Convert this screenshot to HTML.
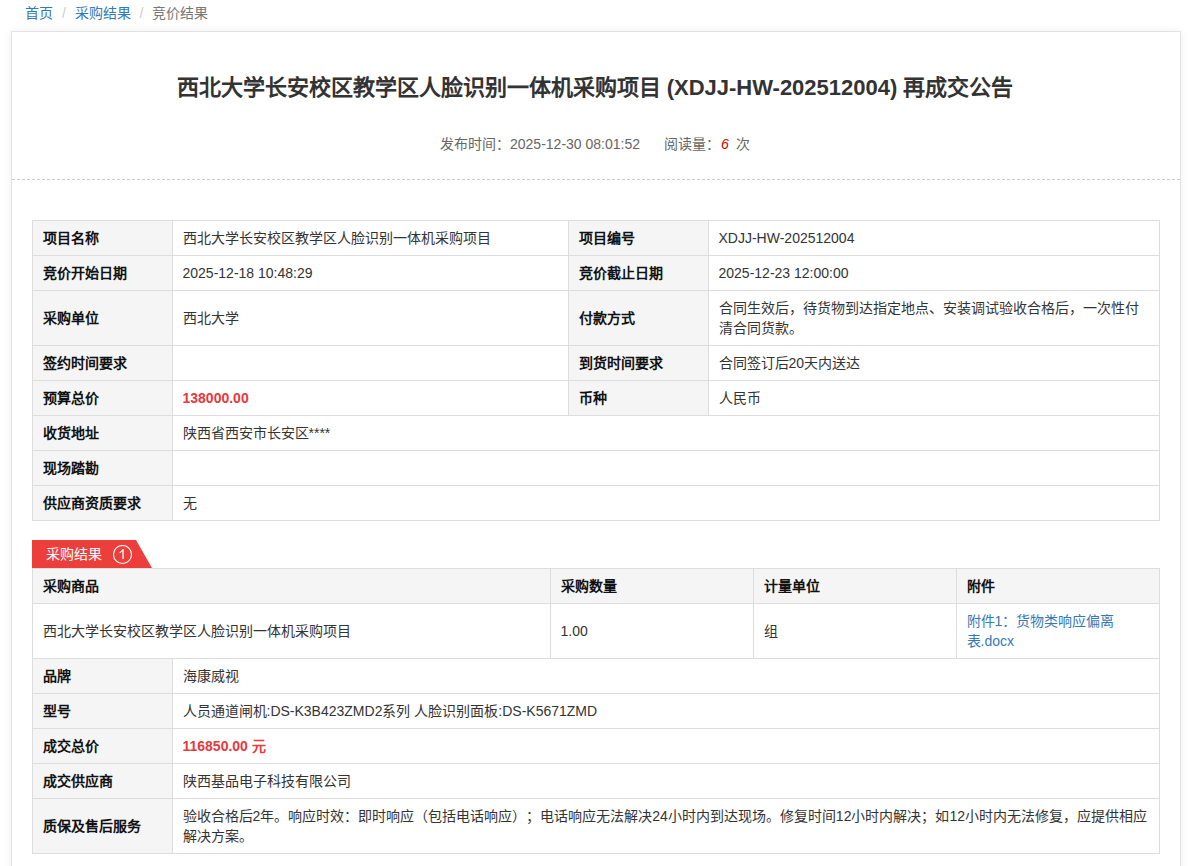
<!DOCTYPE html>
<html lang="zh-CN">
<head>
<meta charset="utf-8">
<title>竞价结果</title>
<style>
*{box-sizing:border-box;}
html,body{margin:0;padding:0;background:#fff;}
body{font-family:"Liberation Sans",sans-serif;text-spacing-trim:space-all;font-size:14px;color:#333;line-height:20px;width:1189px;height:866px;overflow:hidden;position:relative;}
.crumb{position:absolute;left:25px;top:3px;height:20px;line-height:20px;white-space:nowrap;}
.crumb a{color:#337ab7;text-decoration:none;}
.crumb .sep{color:#ccc;padding:0 5px;}
.crumb .act{color:#777;}
.card{position:absolute;left:11px;top:31px;width:1170px;height:900px;border:1px solid #e3e3e3;box-shadow:0 0 8px rgba(0,0,0,0.07);background:#fff;}
.hd{height:148px;border-bottom:1px dashed #ccc;text-align:center;position:relative;}
.hd h1{margin:0;position:absolute;left:0;right:2px;top:41px;font-size:22px;line-height:30px;font-weight:bold;color:#333;}
.hd .meta{position:absolute;left:428px;right:0;top:102px;color:#666;line-height:20px;text-align:left;}
.hd .meta .red{color:#cc0000;font-style:italic;margin:0 7px 0 1px;}
.bd{padding:40px 20px 0 20px;}
table{border-collapse:collapse;width:1127px;table-layout:fixed;}
td,th{border:1px solid #dddddd;padding:7px 9px 7px 9.5px;line-height:20px;text-align:left;vertical-align:middle;}
td.l,th{background:#f5f5f5;font-weight:bold;color:#111;}
td.v{color:#333;}
td.price{color:#e8383c;font-weight:bold;}
.tab{position:relative;height:28px;margin-top:19px;}
.tab svg{position:absolute;left:0;top:0;}
.tab span{position:absolute;left:14px;top:4px;color:#fff;line-height:20px;}
.tab svg.num{position:absolute;left:81px;top:5px;}
a.file{color:#337ab7;text-decoration:none;}
.t2 td,.t2 th{}
.nobt tr:first-child td{border-top:none;}
</style>
</head>
<body>
<div class="crumb"><a href="#">首页</a> <span class="sep">/&nbsp;</span><a href="#">采购结果</a> <span class="sep">/&nbsp;</span><span class="act">竞价结果</span></div>
<div class="card">
  <div class="hd">
    <h1>西北大学长安校区教学区人脸识别一体机采购项目 (XDJJ-HW-202512004) 再成交公告</h1>
    <div class="meta">发布时间：2025-12-30 08:01:52<span style="display:inline-block;width:24px"></span>阅读量：<span class="red">6</span>次</div>
  </div>
  <div class="bd">
    <table>
      <colgroup><col style="width:140px"><col style="width:396px"><col style="width:140px"><col style="width:451px"></colgroup>
      <tr><td class="l">项目名称</td><td class="v">西北大学长安校区教学区人脸识别一体机采购项目</td><td class="l">项目编号</td><td class="v">XDJJ-HW-202512004</td></tr>
      <tr><td class="l">竞价开始日期</td><td class="v">2025-12-18 10:48:29</td><td class="l">竞价截止日期</td><td class="v">2025-12-23 12:00:00</td></tr>
      <tr><td class="l">采购单位</td><td class="v">西北大学</td><td class="l">付款方式</td><td class="v">合同生效后，待货物到达指定地点、安装调试验收合格后，一次性付清合同货款。</td></tr>
      <tr><td class="l">签约时间要求</td><td class="v"></td><td class="l">到货时间要求</td><td class="v">合同签订后20天内送达</td></tr>
      <tr><td class="l">预算总价</td><td class="v price">138000.00</td><td class="l">币种</td><td class="v">人民币</td></tr>
      <tr><td class="l">收货地址</td><td class="v" colspan="3">陕西省西安市长安区****</td></tr>
      <tr><td class="l">现场踏勘</td><td class="v" colspan="3"></td></tr>
      <tr><td class="l">供应商资质要求</td><td class="v" colspan="3">无</td></tr>
    </table>
    <div class="tab">
      <svg width="120" height="28"><polygon points="0,0 104,0 120,28 0,28" fill="#ec3f3c"/></svg>
      <span>采购结果</span><svg class="num" width="20" height="20" viewBox="0 0 20 20"><circle cx="9.5" cy="9.5" r="9" fill="none" stroke="#fff" stroke-width="1.1"/><path d="M9.4 4.3 L10.8 4.3 L10.8 14 L9.4 14 L9.4 6.6 Q8.2 7.7 6.5 8.3 L6.5 7.2 Q8.6 6.2 9.4 4.3 Z" fill="#fff"/></svg>
    </div>
    <table>
      <colgroup><col style="width:518px"><col style="width:203px"><col style="width:203px"><col style="width:203px"></colgroup>
      <tr><th>采购商品</th><th>采购数量</th><th>计量单位</th><th>附件</th></tr>
      <tr><td class="v">西北大学长安校区教学区人脸识别一体机采购项目</td><td class="v">1.00</td><td class="v">组</td><td class="v"><a class="file" href="#">附件1：货物类响应偏离表.docx</a></td></tr>
    </table>
    <table class="nobt">
      <colgroup><col style="width:140px"><col style="width:987px"></colgroup>
      <tr><td class="l">品牌</td><td class="v">海康威视</td></tr>
      <tr><td class="l">型号</td><td class="v">人员通道闸机:DS-K3B423ZMD2系列 人脸识别面板:DS-K5671ZMD</td></tr>
      <tr><td class="l">成交总价</td><td class="v price">116850.00 元</td></tr>
      <tr><td class="l">成交供应商</td><td class="v">陕西基品电子科技有限公司</td></tr>
      <tr><td class="l">质保及售后服务</td><td class="v">验收合格后2年。响应时效：即时响应（包括电话响应）；电话响应无法解决24小时内到达现场。修复时间12小时内解决；如12小时内无法修复，应提供相应解决方案。</td></tr>
    </table>
  </div>
</div>
</body>
</html>
